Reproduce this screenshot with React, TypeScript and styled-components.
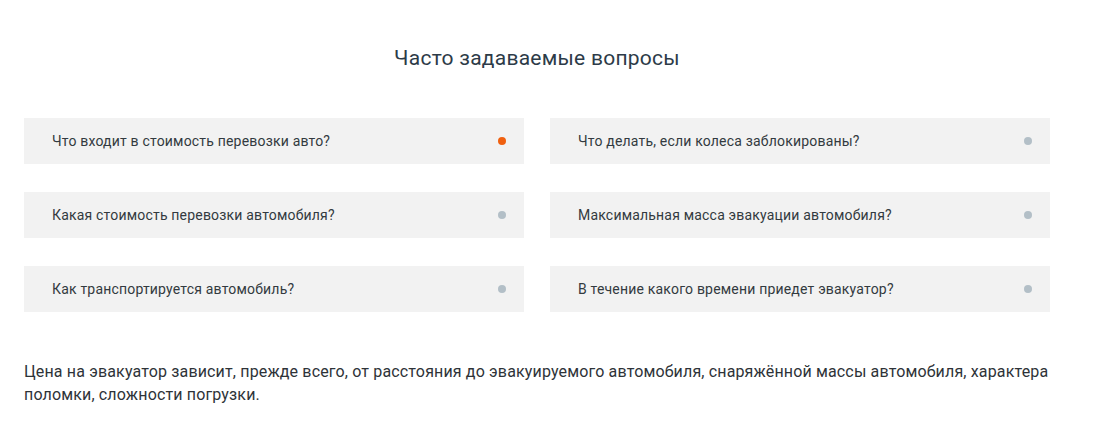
import React from "react";
import styled, { createGlobalStyle } from "styled-components";

const Global = createGlobalStyle`
  html, body { margin: 0; padding: 0; background: #fff; }
  body { font-family: Roboto, "Noto Sans", Arial, sans-serif; }
`;

const Section = styled.section`
  width: 1026px;
  margin-left: 24px;
  padding-top: 46px;
`;

const Title = styled.h2`
  margin: 0;
  text-align: center;
  font-weight: 400;
  font-size: 21px;
  line-height: 24px;
  letter-spacing: 0.25px;
  color: #2d3b48;
`;

const Grid = styled.div`
  margin-top: 48px;
  display: grid;
  grid-template-columns: 500px 500px;
  column-gap: 26px;
  row-gap: 28px;
`;

const Item = styled.div`
  height: 46px;
  background: #f2f2f2;
  display: flex;
  align-items: center;
  justify-content: space-between;
  padding: 0 18px 0 28px;
  box-sizing: border-box;
  font-size: 14px;
  letter-spacing: 0.19px;
  color: #333a40;
  cursor: pointer;
`;

const Dot = styled.span<{ $active?: boolean }>`
  width: 8px;
  height: 8px;
  border-radius: 50%;
  background: ${(p) => (p.$active ? "#f0600f" : "#b3bfc7")};
  flex: none;
`;

const Text = styled.p`
  margin: 48px 0 0;
  font-size: 16px;
  line-height: 23px;
  letter-spacing: 0.15px;
  color: #2e3338;
`;

const questions = [
  ["Что входит в стоимость перевозки авто?", true],
  ["Что делать, если колеса заблокированы?", false],
  ["Какая стоимость перевозки автомобиля?", false],
  ["Максимальная масса эвакуации автомобиля?", false],
  ["Как транспортируется автомобиль?", false],
  ["В течение какого времени приедет эвакуатор?", false],
] as const;

export default function App() {
  return (
    <>
      <Global />
      <Section>
        <Title>Часто задаваемые вопросы</Title>
        <Grid>
          {questions.map(([q, a]) => (
            <Item key={q}>
              <span>{q}</span>
              <Dot $active={a} />
            </Item>
          ))}
        </Grid>
        <Text>
          Цена на эвакуатор зависит, прежде всего, от расстояния до эвакуируемого автомобиля, снаряжённой массы автомобиля, характера поломки, сложности погрузки.
        </Text>
      </Section>
    </>
  );
}
